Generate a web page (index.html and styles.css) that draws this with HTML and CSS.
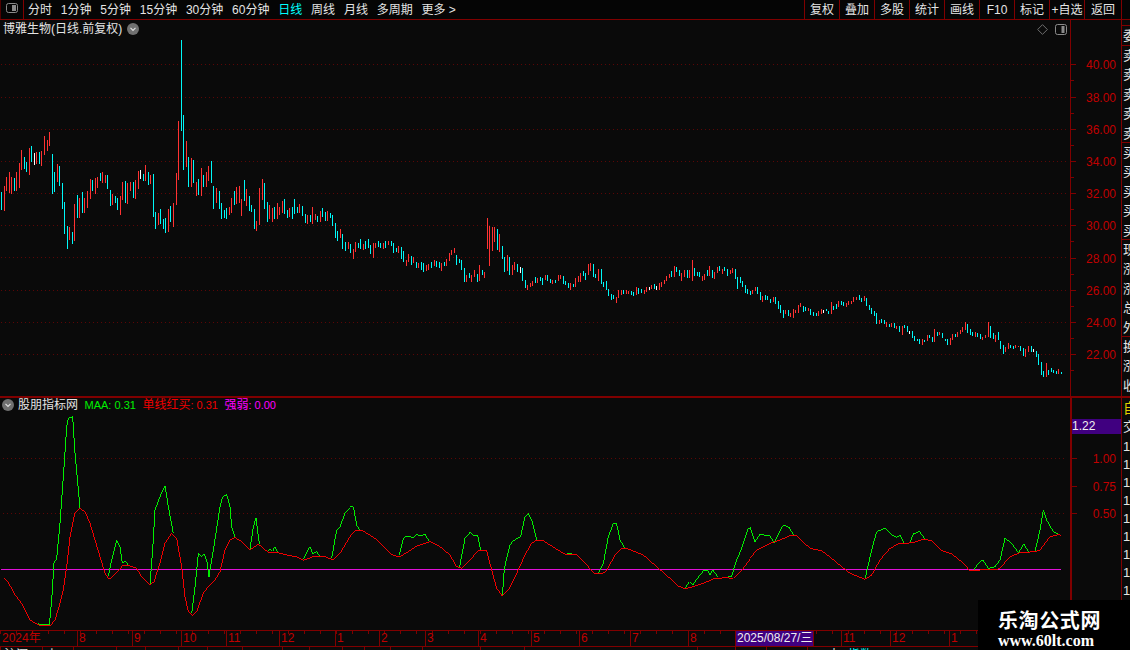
FILE: index.html
```html
<!DOCTYPE html>
<html lang="zh">
<head>
<meta charset="utf-8">
<title>博雅生物</title>
<link rel="stylesheet" href="styles.css">
</head>
<body>
<header class="top">
  <div class="panel-btn"><svg class="ic" viewBox="0 0 12 10"><rect x=".5" y=".5" width="11" height="9" rx="2" class="ic-box"/><rect x="6" y="2" width="4" height="6" class="ic-fill"/></svg></div>
  <nav class="periods">
    <span>分时</span><span>1分钟</span><span>5分钟</span><span>15分钟</span><span>30分钟</span><span>60分钟</span><span class="on">日线</span><span>周线</span><span>月线</span><span>多周期</span><span>更多 &gt;</span>
  </nav>
  <div class="tools">
    <span>复权</span><span>叠加</span><span>多股</span><span>统计</span><span>画线</span><span>F10</span><span>标记</span><span>+自选</span><span>返回</span><span class="stub"></span>
  </div>
</header>

<div class="work">
  <main class="charts">
    <section class="pane price">
      <div class="plot">
        <div class="title"><span>博雅生物(日线.前复权)</span><svg class="drop" viewBox="0 0 12 12"><circle cx="6" cy="6" r="6"/><path d="M3.5 4.8 6 7.3 8.5 4.8"/></svg></div>
        <div class="corner">
          <svg class="dia" viewBox="0 0 12 12"><path d="M6 .7 11.3 6 6 11.3 .7 6Z"/></svg>
          <svg class="ic" viewBox="0 0 12 12"><rect x=".5" y=".5" width="11" height="10" rx="2" class="ic-box"/><rect x="6.5" y="2" width="3" height="7" class="ic-fill"/></svg>
        </div>
        <svg class="chart" viewBox="0 20 1070 376">
          <path class="grid" d="M1 64.5H1066M1 97.5H1066M1 129.5H1066M1 161.5H1066M1 193.5H1066M1 225.5H1066M1 257.5H1066M1 290.5H1066M1 322.5H1066M1 354.5H1066"/>
          <g class="bars" transform="translate(.5 130) scale(.33333)">
            <path class="up" d="M12 168V242M18 140V183M27 126V190M33 140V192M48 126V183M57 98V173M63 60V120M87 54V135M108 66V102M123 63V108M132 18V75M141 30V63M147 6V48M171 102V156M207 291V330M222 222V333M237 204V264M252 204V249M261 183V234M270 147V207M285 144V192M291 141V174M306 126V159M315 135V159M336 192V225M360 198V255M366 156V210M381 159V222M390 156V183M405 150V207M414 123V177M435 105V153M450 135V162M474 249V285M504 237V306M519 219V291M528 129V225M534 -27V150M558 33V111M573 84V171M588 156V198M603 114V198M618 126V171M624 108V153M648 174V219M687 231V255M693 204V249M708 171V222M717 168V219M723 207V258M738 177V228M768 273V303M777 174V285M786 147V210M807 225V267M816 234V276M831 219V267M837 231V255M846 213V249M867 234V261M897 222V249M921 255V282M936 231V282M945 252V270M960 243V276M981 243V273M1020 297V324M1044 336V357"/>
            <path class="down" d="M3 185V240M42 144V183M72 81V117M78 96V126M93 48V96M117 66V102M156 72V192M162 126V186M177 108V168M186 159V237M192 216V312M201 288V357M216 306V342M231 195V264M246 186V250M276 150V183M300 129V153M321 135V177M330 180V228M345 198V219M351 204V240M375 153V219M399 156V204M429 132V153M444 126V165M459 132V261M465 246V297M480 237V282M489 267V297M495 264V309M510 228V276M543 -270V3M549 -45V120M564 81V171M579 90V159M594 147V195M609 135V171M633 93V159M640 168V237M657 183V237M663 219V267M672 240V264M678 234V267M702 183V225M732 150V213M747 198V243M753 225V246M762 237V297M792 159V237M801 216V276M822 231V267M852 207V252M861 240V264M876 231V267M882 207V252M891 231V249M906 228V258M915 252V279M930 255V276M951 258V276M966 234V261M975 246V273M990 249V264M996 255V288M1005 279V324M1011 303V333M1026 312V357M1035 336V363"/>
            <path class="flat" d="M102 69V105M420 120V147"/>
          </g>
          <g class="bars" transform="translate(350.5 200) scale(.33333)">
            <path class="up" d="M9 147V177M15 126V156M39 132V150M69 129V174M75 129V144M99 129V147M114 123V135M144 138V159M168 180V198M174 162V186M189 171V189M204 189V204M228 195V213M234 192V210M252 180V198M273 189V213M288 177V198M297 159V183M303 150V165M312 144V159M348 225V246M363 225V246M372 210V231M387 195V243M402 216V234M411 54V147M417 78V198M426 81V153M432 81V126M447 102V156M471 165V213M486 195V225M492 186V210M531 255V270M540 249V261M546 243V258M561 234V249M585 225V240M606 240V252M624 225V243M630 225V237M660 249V270M675 234V261M684 228V246M690 219V246M714 192V225M720 189V213M744 207V243M798 291V309M804 270V294M813 270V285M828 270V282M834 273V282M858 261V285M882 270V282M888 261V276M903 255V267M927 249V270M933 246V261M942 240V252M948 228V243M957 222V234M972 198V231M993 219V243M1002 210V231M1017 210V234M1026 180V243"/>
            <path class="down" d="M0 132V159M24 129V144M30 117V147M45 123V147M54 117V144M60 135V162M84 123V141M90 129V144M105 123V144M123 123V138M129 129V159M138 144V156M153 141V177M159 153V186M183 168V195M198 186V204M213 186V210M219 189V216M243 186V204M258 183V201M267 186V204M282 186V198M319 165V195M327 177V189M333 180V210M342 204V246M357 219V234M381 222V246M396 210V225M441 87V150M456 138V177M462 171V216M477 171V225M501 192V216M516 204V243M525 240V264M555 231V249M570 231V243M576 234V255M591 225V243M600 237V249M615 240V249M639 228V252M645 243V255M654 249V264M669 252V261M699 213V228M705 219V240M729 192V231M735 222V234M753 207V252M759 246V261M768 243V270M774 267V288M783 282V300M789 285V297M819 270V282M843 273V285M849 276V288M864 264V282M873 267V279M912 252V267M963 213V231M978 201V216M987 210V228M1011 210V234M1032 204V228M1041 216V228M1047 216V231"/>
            <path class="flat" d="M510 201V219M897 261V270M918 258V270"/>
          </g>
          <g class="bars" transform="translate(700.5 250) scale(.33333)">
            <path class="up" d="M6 78V93M12 72V90M27 48V78M42 66V87M51 51V69M66 57V72M90 60V72M96 54V69M156 120V132M165 111V123M186 138V156M219 141V156M255 180V192M270 189V201M279 177V204M285 180V189M294 165V189M300 159V171M324 174V183M354 183V198M363 177V192M393 156V192M414 153V171M438 159V171M444 153V165M453 153V162M459 141V156M468 141V150M492 138V153M537 210V222M558 216V231M573 219V231M588 228V237M606 228V255M666 267V285M681 255V273M702 237V276M717 246V255M750 264V285M756 252V270M771 246V261M780 240V252M786 231V246M795 216V240M825 246V261M846 261V270M855 255V264M864 216V261M885 255V276M915 291V306M924 279V297M945 285V294M954 288V291M975 297V321M984 288V306M1038 339V381M1074 357V372"/>
            <path class="down" d="M21 60V78M36 60V84M57 48V63M72 51V63M81 57V78M105 57V87M111 81V117M120 81V99M126 93V111M135 105V129M141 117V132M150 123V135M171 111V132M180 126V150M195 135V150M201 138V150M210 147V159M225 141V162M234 153V177M240 165V189M249 180V204M264 180V198M309 168V186M315 171V183M330 177V195M339 186V198M348 189V198M378 177V183M384 183V192M399 168V180M408 162V177M423 153V165M429 156V168M477 135V150M483 144V156M498 144V168M507 165V180M513 174V192M522 183V198M528 189V222M543 207V219M552 210V222M567 222V231M582 219V234M597 228V246M612 225V234M621 228V246M636 243V264M642 258V273M651 267V273M657 267V282M672 270V276M687 255V264M696 261V276M711 246V258M726 249V264M735 267V273M741 267V285M765 252V261M801 222V249M810 237V255M816 246V258M831 249V261M840 252V267M870 228V264M879 249V267M894 246V270M900 273V297M909 285V312M930 285V294M939 288V297M960 288V303M969 294V318M993 288V306M1008 303V321M1014 312V345M1023 336V375M1029 363V381M1044 360V375M1053 354V366M1059 360V369M1068 363V372M1083 366V372"/>
            <path class="flat" d="M369 180V189M627 243V252M999 297V306"/>
          </g>
        </svg>
      </div>
      <div class="axis price-axis">
        <div class="tick">40.00</div><div class="tick">38.00</div><div class="tick">36.00</div><div class="tick">34.00</div><div class="tick">32.00</div><div class="tick">30.00</div><div class="tick">28.00</div><div class="tick">26.00</div><div class="tick">24.00</div><div class="tick">22.00</div>
      </div>
    </section>

    <section class="pane ind">
      <div class="plot">
        <div class="legend">
          <svg class="drop" viewBox="0 0 12 12"><circle cx="6" cy="6" r="6"/><path d="M3.5 4.8 6 7.3 8.5 4.8"/></svg>
          <span class="l-name">股朋指标网</span><span class="l-g"><small>MAA: 0.31</small></span><span class="l-r">单线红买<small>: 0.31</small></span><span class="l-m">强弱<small>: 0.00</small></span>
        </div>
        <svg class="chart" viewBox="0 398 1070 232">
          <path class="grid" d="M3 458.5H1066M3 513.5H1066"/>
          <path class="zero" d="M1 569.5H1061"/>
          <g class="lines" transform="translate(0 390) scale(.33333)">
            <path class="g" d="M115 702 130 703 148 705 155 630 162 520 170 505 180 400 190 260 200 110 205 85 218 80 225 190 235 300 240 355M325 558 335 510 350 450 360 470 367 520 375 512 385 525M450 583 458 480 465 360 480 320 495 288 505 350 520 430M575 670 585 590 595 490 605 500 612 492 620 510 627 560 640 480 660 350 668 320 680 313 690 350 695 410 705 443M750 478 760 410 768 385 778 462M805 482 812 478 818 484 824 470 832 485M908 510 930 470 938 492 950 485 958 498M995 505 1010 420 1020 410 1035 370 1050 355"/>
            <path class="r" d="M13 565 25 578 35 595 47 618 60 632 75 660 90 690 115 705 150 708 165 690 180 640 190 600 200 530 210 440 225 368 240 355 255 365 270 400 285 450 300 500 315 550 327 568 345 553 370 525 390 528 410 535 425 560 450 585 462 575 480 520 495 460 515 430 530 445 545 530 555 620 565 665 578 677 590 665 610 610 625 590 645 570 660 545 675 480 690 450 705 443 725 455 750 480 775 462 790 475 805 487 830 487 860 495 895 502 910 511 940 500 970 498 1000 510 1020 490 1050 440"/>
          </g>
          <g class="lines" transform="translate(350 490) scale(.33333)">
            <path class="g" d="M0 48 10 50 20 105 30 120M148 195 160 145 170 138 190 143 200 133 210 138 225 133 238 155M328 235 345 145 360 127 372 137 383 137 392 180M457 318 463 235 480 165 490 152 512 140 525 80 535 70 545 90 560 150M650 190 665 190M745 250 760 220 775 140 790 100 800 102 810 150 825 175M1005 295 1018 275 1028 285 1050 255 1060 243 1075 243 1080 255 1088 240 1105 262M1125 263 1145 258 1160 210 1175 175 1195 115 1200 115"/>
            <path class="r" d="M0 140 15 122 35 120 75 145 100 170 130 197 150 200 175 185 200 168 240 155 270 170 300 195 320 230 335 235 355 215 385 182 410 182 425 240 440 295 457 318 475 300 500 250 525 195 545 160 560 150 580 152 620 178 650 195 680 195 710 225 735 252 755 252 770 242 795 195 815 176 830 175 880 195 920 230 960 265 985 288 1005 296 1030 290 1060 280 1090 267 1125 263 1150 265 1180 235 1200 208"/>
          </g>
          <g class="lines" transform="translate(750 390) scale(.33333)">
            <path class="g" d="M0 410 15 455 30 433 60 438 72 458 100 405 118 412 130 435M345 568 365 480 380 425 405 415 425 435 440 442 450 435 462 458M480 458 490 432 508 424 525 447M672 540 685 520 698 510 715 535 735 530 750 510 765 445 785 460 805 488 822 462 835 485M855 485 870 420 880 360 890 390 910 425 932 436"/>
            <path class="r" d="M0 505 20 480 60 460 90 450 125 435 140 437 180 475 215 482 245 505 275 530 300 550 345 568 365 555 390 510 420 475 445 462 490 458 520 448 545 452 575 482 605 492 635 515 660 542 690 540 715 537 735 540 750 535 780 500 810 488 855 485 870 480 900 440 925 434 932 436"/>
          </g>
        </svg>
      </div>
      <div class="axis ind-axis">
        <div class="cur">1.22</div>
        <div class="tick">1.00</div><div class="tick">0.75</div><div class="tick">0.50</div>
      </div>
    </section>

    <div class="dates">
      <span class="d w77">2024年</span><span class="d w55">8</span><span class="d w49">9</span><span class="d w45">10</span><span class="d w53">11</span><span class="d w56">12</span><span class="d w44">1</span><span class="d w46">2</span><span class="d w53">3</span><span class="d w53">4</span><span class="d w48">5</span><span class="d w51">6</span><span class="d w58">7</span><span class="d w47">8</span><span class="d sel">2025/08/27/三</span><span class="d w28"></span><span class="d w49">11</span><span class="d w59">12</span><span class="d w60">1</span>
    </div>
    <div class="status">
      <span class="c w42">&nbsp;沪深</span><span class="c w31">&nbsp;上</span><span class="c w43"></span><span class="c w29"></span><span class="c w33"></span><span class="c w29"></span><span class="c w35"></span><span class="c w40"></span><span class="c w27"></span><span class="c w33"></span><span class="c w22"></span><span class="c w26"></span><span class="c w32"></span><span class="c w58"></span><span class="c w44"></span><span class="c w173"></span><span class="c w38"></span><span class="c w31"></span><span class="c w41"></span><span class="c w65 tail"><b>大</b><i>指数</i></span>
    </div>
  </main>

  <aside class="side">
    <div class="blank"></div>
    <div class="sec one"><p>委</p></div>
    <div class="sec"><p>卖</p><p>卖</p><p>卖</p><p>卖</p><p>卖</p></div>
    <div class="sec"><p>买</p><p>买</p><p>买</p><p>买</p><p>买</p></div>
    <div class="sec"><p>现</p><p>涨</p><p>涨</p><p>总</p><p>外</p></div>
    <div class="sec last"><p>换</p><p>涨</p><p>收</p></div>
    <div class="sec low"><p class="auto">自</p><p class="deal">交</p></div>
    <div class="nums"><p>1</p><p>1</p><p>1</p><p>1</p><p>1</p><p>1</p><p>1</p><p>1</p><p>1</p></div>
  </aside>
</div>

<div class="mark"><strong>乐淘公式网</strong><em>www.60lt.com</em></div>
</body>
</html>
```

FILE: styles.css
```css
* { box-sizing: border-box; }
html, body { margin: 0; padding: 0; }
body {
  position: relative;
  width: 1130px;
  height: 650px;
  overflow: hidden;
  background: #0a0a0a;
  color: #e4e4e4;
  font: 12px/14px "Liberation Sans", "Noto Sans CJK SC", sans-serif;
}
svg { display: block; }

/* top bar */
.top {
  display: flex;
  height: 20px;
  border-bottom: 1px solid #800000;
  line-height: 21px;
  background: #050505;
}
.panel-btn {
  width: 24px;
  padding: 3px 0 0 5px;
  border-left: 1px solid #500000;
  border-right: 1px solid #800000;
}
.ic { width: 12px; height: 10px; }
.ic-box { fill: none; stroke: #8a8a8a; }
.ic-fill { fill: #8a8a8a; }
.periods { display: flex; gap: 8.8px; padding-left: 4px; }
.periods .on { color: #00ffff; }
.tools { display: flex; margin-left: auto; }
.tools span {
  width: 35px;
  border-left: 1px solid #800000;
  text-align: center;
}
.tools span:nth-child(9) { width: 37px; }
.tools .stub { width: 9px; }

/* layout */
.work { display: flex; height: 630px; }
.charts { width: 1122px; border-right: 1px solid #800000; }
.pane { display: flex; }
.price { height: 376px; }
.ind { height: 234px; border-top: 2px solid #800000; }
.plot { position: relative; width: 1070px; }
.chart { width: 1070px; height: 100%; }

.title {
  position: absolute;
  top: 2px;
  left: 3px;
  display: flex;
  align-items: center;
  gap: 5px;
}
.drop { width: 12px; height: 12px; }
.drop circle { fill: #707070; }
.drop path { fill: none; stroke: #e0e0e0; stroke-width: 1.2; }
.corner {
  position: absolute;
  top: 4px;
  left: 1037px;
  display: flex;
  gap: 7px;
}
.dia { width: 11px; height: 11px; }
.dia path { fill: none; stroke: #777; }
.corner .ic { height: 12px; }

.grid { fill: none; stroke: #5c0606; stroke-dasharray: 1 3; }
.bars path { fill: none; stroke-width: 3; shape-rendering: crispEdges; }
.bars .up { stroke: #ff3232; }
.bars .down { stroke: #00f8f8; }
.bars .flat { stroke: #ffffff; }

.lines path { fill: none; stroke-width: 3; shape-rendering: crispEdges; }
.lines .g { stroke: #00f000; }
.lines .r { stroke: #f00000; }
.zero { stroke: #e010d8; fill: none; }

/* axes */
.axis {
  position: relative;
  width: 51px;
  border-left: 1px solid #800000;
  color: #c00000;
}
.price-axis { padding-top: 28.3px; }
.tick {
  position: relative;
  display: flex;
  align-items: center;
  justify-content: flex-end;
  padding: 2px 5px 0 0;
  height: 32.2px;
}
.tick::before {
  content: "";
  position: absolute;
  left: 0;
  top: 50%;
  width: 5px;
  height: 1px;
  background: #800000;
}
.tick::after {
  content: "";
  position: absolute;
  left: 0;
  top: calc(50% + 16px);
  width: 3px;
  height: 1px;
  background: #800000;
}
.ind-axis { border-left-width: 2px; padding-top: 46.5px; }
.ind-axis .tick { height: 27.5px; }
.ind-axis .tick::after { display: none; }
.cur {
  position: absolute;
  top: 21px;
  left: 0;
  width: 49px;
  height: 15px;
  line-height: 15px;
  background: #400080;
  color: #f0f0f0;
}

.legend {
  position: absolute;
  top: 0;
  left: 2px;
  display: flex;
  align-items: center;
  height: 14px;
  gap: 6.5px;
}
.legend .drop { margin-right: -2.5px; }
.legend small { font-size: 11px; }
.l-g { color: #00f000; }
.l-r { color: #f00000; }
.l-m { color: #ff00ff; }

/* date axis */
.dates {
  display: flex;
  height: 17px;
  border-top: 1px solid #800000;
  border-bottom: 1px solid #800000;
  color: #c00000;
  line-height: 15px;
  background: repeating-linear-gradient(90deg, #800000 0 1px, transparent 1px 16px) 0 0 / 100% 3px no-repeat;
}
.d { flex: none; padding-left: 1px; border-left: 1px solid #800000; }
.d:first-child { padding-left: 2px; border-left: 0; }
.sel { width: 78px; background: #400080; color: #f0f0f0; white-space: nowrap; }
.w22 { width: 22px; } .w26 { width: 26px; } .w27 { width: 27px; } .w28 { width: 28px; } .w29 { width: 29px; }
.w31 { width: 31px; } .w32 { width: 32px; } .w33 { width: 33px; } .w35 { width: 35px; } .w38 { width: 38px; }
.w40 { width: 40px; } .w41 { width: 41px; } .w42 { width: 42px; } .w43 { width: 43px; } .w44 { width: 44px; }
.w45 { width: 45px; } .w46 { width: 46px; } .w47 { width: 47px; } .w48 { width: 48px; } .w49 { width: 49px; }
.w51 { width: 51px; } .w53 { width: 53px; } .w55 { width: 55px; } .w56 { width: 56px; } .w58 { width: 58px; }
.w59 { width: 59px; } .w60 { width: 60px; } .w65 { width: 65px; } .w77 { width: 77px; } .w173 { width: 173px; }

/* clipped status row */
.status { display: flex; height: 3px; overflow: hidden; line-height: 16px; }
.c { flex: none; height: 14px; border-left: 1px solid #800000; white-space: nowrap; }
.tail b { font-weight: 400; margin-left: 20px; margin-right: 8px; }
.tail i { font-style: normal; color: #00ffff; }

/* clipped right rail */
.side { width: 8px; overflow: hidden; font-size: 13px; line-height: 19.4px; white-space: nowrap; }
.side p { margin: 0; padding-left: 1px; }
.blank { height: 5px; }
.sec { border-top: 1px solid #800000; height: 97px; }
.sec.one { height: 20px; line-height: 19px; }
.sec.last { height: 60px; }
.sec.low { height: 38px; border-top-width: 2px; }
.auto { color: #e0d000; font-size: 14px; height: 21px; line-height: 21px; }
.deal { height: 16px; line-height: 15px; }
.nums { padding-top: 4px; line-height: 18px; }

/* watermark */
.mark {
  position: absolute;
  right: 0;
  bottom: 0;
  display: flex;
  flex-direction: column;
  align-items: center;
  width: 152px;
  height: 50px;
  padding: 8px 9px 0 0;
  background: #000;
  color: #fff;
  font-family: "Noto Sans CJK SC", sans-serif;
}
.mark strong { font-size: 20px; line-height: 24px; letter-spacing: .6px; }
.mark em { margin-right: 7px; font: bold 16px/18px "Liberation Serif", serif; }
```
